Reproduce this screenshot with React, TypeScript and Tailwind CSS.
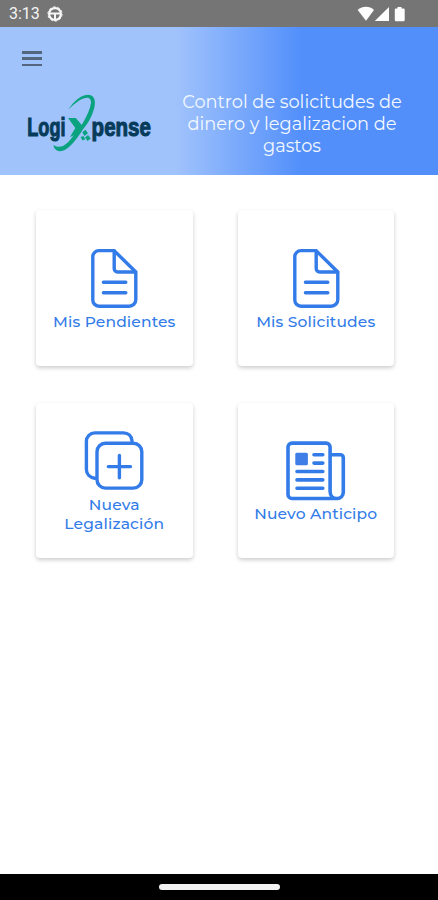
import React from 'react';

const DocumentIcon = () => (
  <svg width="60" height="60" viewBox="0 0 60 60" fill="none" stroke="#327be8" strokeWidth="3.4" strokeLinecap="round" strokeLinejoin="round">
    <path d="M15 2.6H30.1L51.8 24V51.6a6.6 6.6 0 0 1-6.6 6.6H15a6.2 6.2 0 0 1-6.2-6.6V9.2a6.2 6.2 0 0 1 6.2-6.6Z" />
    <path d="M30.2 3V20.6a3.4 3.4 0 0 0 3.4 3.4H51.6M19.4 34.3H41.8M19.4 44.8H41.8" />
  </svg>
);

const CopyPlusIcon = () => (
  <svg width="60" height="60" viewBox="0 0 60 60" fill="none" stroke="#327be8" strokeWidth="3.4" strokeLinecap="round" strokeLinejoin="round">
    <path d="M10.8 47.2C6 46.7 2.4 43.2 2.4 38.2V10.3a8.4 8.4 0 0 1 8.4-8.4H39.5c4.8 0 8 3.2 8.5 8" />
    <rect x="13" y="12.3" width="44.8" height="44.8" rx="8.4" />
    <path d="M35.4 24.5V46.7M24.3 35.6H46.5" />
  </svg>
);

const NewspaperIcon = () => (
  <svg width="60" height="60" viewBox="0 0 60 60" fill="none" stroke="#327be8" strokeWidth="3.6" strokeLinecap="round" strokeLinejoin="round">
    <path d="M52 57.5H6a4 4 0 0 1-4-4V6.1a4 4 0 0 1 4-4H40.1a4 4 0 0 1 4 4V50.4c0 4.500 3.200 7.100 6.800 7.100s6.400-2.800 6.400-6.600V16.700a3 3 0 0 0-3-3H44.300" />
    <rect x="9.3" y="11.7" width="12.6" height="12.6" rx="1.5" fill="#3f7ee6" stroke="none" />
    <path d="M28 13.8H36.8M28 22.1H36.8M11 30.5H36.8M11 38.9H36.8M11 47.2H36.8" />
  </svg>
);

const Logo = () => (
  <svg className="overflow-visible" width="126" height="62" viewBox="0 0 126 62" role="img" aria-label="LogiXpense">
    <g fill="#063c5a" stroke="#063c5a" strokeWidth="1.1" fontFamily="'Liberation Sans', Arial, sans-serif" fontWeight="700" fontSize="25.5">
      <text transform="translate(1.3 45) scale(0.71 1)">Logi</text>
      <text transform="translate(65.6 45) scale(0.805 1)">pense</text>
    </g>
    <g fill="#0ba37f">
      <path d="M42.3 18.5C48 9.5 56 3.5 62.5 3.7C69 4 71.5 11 65.7 24.5C63 30.5 61 33.5 57.3 38C48 52 42 59.5 34 60.3C30 60 28 57.5 27.3 54C33.5 58 40 55 46 46.500C50 41 53 37 56.500 32.500C61 25 64 18 65 12C65.500 4 57 4 42.300 18.500Z" />
      <path d="M42 27H49.8L57 35.5L51 43L44 46L49.300 37Z" />
      <path d="M56.300 41.300L59.500 38.800L62 42.300L58.500 45ZM59 46.500L62 44L64.800 47.500L61.500 50ZM54.500 46L57.500 45L59.300 48.300L56.500 49.500Z" />
    </g>
  </svg>
);

interface MenuCardProps {
  icon: React.ReactNode;
  lines: string[];
}

const MenuCard = ({ icon, lines }: MenuCardProps) => (
  <button className="flex flex-col items-center justify-center rounded-[4px] bg-white text-[#327be8] shadow-[0_2px_4px_rgba(0,0,0,0.2)]">
    <span className="flex h-[67px] items-center">{icon}</span>
    {lines.map((line) => (
      <span key={line} className="text-[15.5px] leading-[19px] font-medium tracking-[0.15px] whitespace-nowrap">
        {line}
      </span>
    ))}
  </button>
);

export default function App() {
  return (
    <div className="flex h-[900px] w-[438px] flex-col overflow-hidden bg-white font-['Montserrat','Inter',sans-serif]">
      {/* Status bar */}
      <div className="flex h-[27px] shrink-0 items-center justify-between bg-[#757575] pr-[29px] pl-[9px]">
        <div className="flex items-center gap-[7px] pt-px">
          <span className="font-['Roboto',sans-serif] text-[16px] leading-none text-[#f4f4f4]">3:13</span>
          <svg width="16" height="16" viewBox="0 0 16 16" fill="none" stroke="#f7f7f7">
            <circle cx="8" cy="8" r="5.9" strokeWidth="2.2" />
            <circle cx="8" cy="8" r="7.1" strokeWidth="1" strokeDasharray="2.6 1.861" />
            <path d="M2.5 7.5H13.5M8 8V13.5" strokeWidth="2" />
          </svg>
        </div>
        <svg width="52" height="16" viewBox="0 0 52 16" fill="#fff">
          <path d="M0.7 4C5.5-0.3 12.5-0.3 17 4L9 14.7Z" />
          <path d="M32 1V15H17.8Z" />
          <path d="M40.5 1H44.5V2.5H46.5A1.2 1.2 0 0 1 47.7 3.7V14A1.2 1.2 0 0 1 46.5 15.2H39A1.2 1.2 0 0 1 37.8 14V3.7A1.2 1.2 0 0 1 39 2.5H40.5Z" />
        </svg>
      </div>

      {/* Header */}
      <header className="h-[147.5px] shrink-0 bg-[linear-gradient(90deg,#a1c3fc_40%,#528ffb_69%)] pt-6">
        <button className="ml-[21.5px] flex h-[15px] w-[20.5px] flex-col justify-between" aria-label="Menu">
          <span className="h-[2.5px] w-full bg-[#53657f]" />
          <span className="h-[2.5px] w-full bg-[#53657f]" />
          <span className="h-[2.5px] w-full bg-[#53657f]" />
        </button>
        <div className="flex pt-[25px] pl-[26px]">
          <Logo />
          <h1 className="ml-[20px] w-[240px] text-center text-[17.8px] leading-[22px] whitespace-nowrap text-[#f3f8ff]">
            <span className="block">Control de solicitudes de</span>
            <span className="block">dinero y legalizacion de</span>
            <span className="block">gastos</span>
          </h1>
        </div>
      </header>

      {/* Menu */}
      <main className="grid grow grid-cols-[156.5px_156.5px] grid-rows-[156.5px_155px] gap-x-[45px] gap-y-[36.5px] pt-[35px] pl-9">
        <MenuCard icon={<DocumentIcon />} lines={['Mis Pendientes']} />
        <MenuCard icon={<DocumentIcon />} lines={['Mis Solicitudes']} />
        <MenuCard icon={<CopyPlusIcon />} lines={['Nueva', 'Legalización']} />
        <MenuCard icon={<NewspaperIcon />} lines={['Nuevo Anticipo']} />
      </main>

      {/* Navigation bar */}
      <div className="flex h-[26px] shrink-0 justify-center bg-black pt-[10px]">
        <div className="h-[6px] w-[121px] rounded-full bg-[#f2f2f2]" />
      </div>
    </div>
  );
}
